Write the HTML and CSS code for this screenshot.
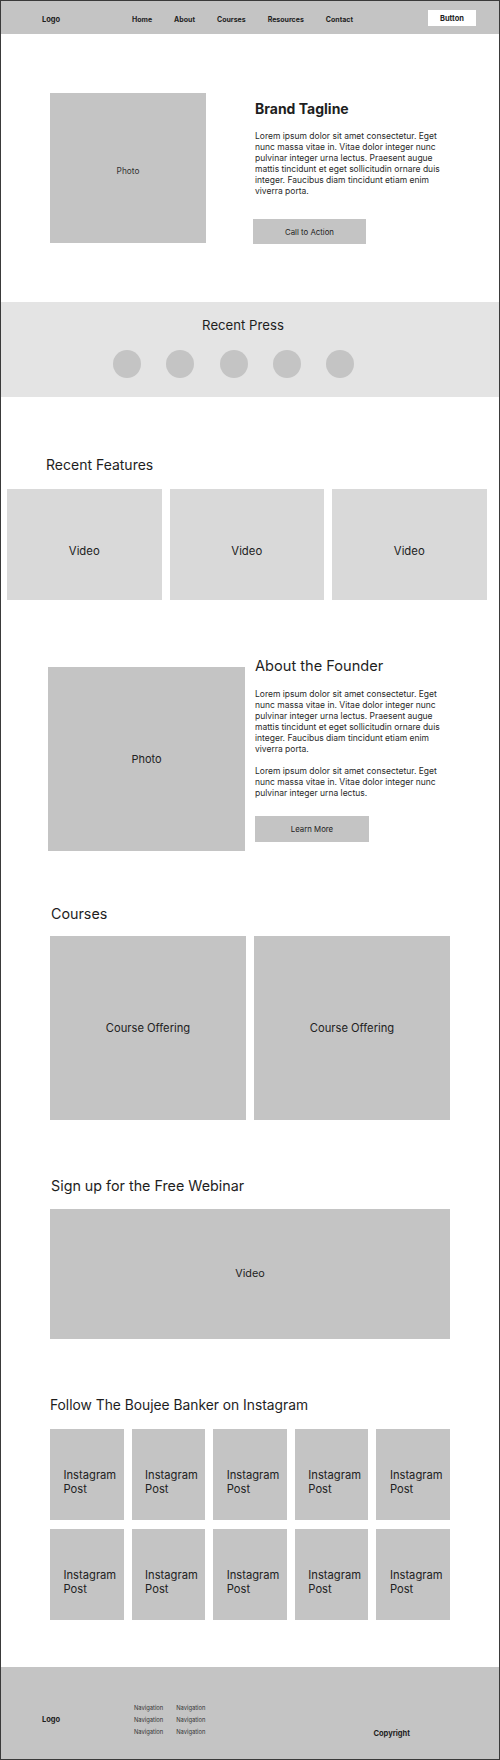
FILE: index.html
```html
<!DOCTYPE html>
<html lang="en">
<head>
  <meta charset="UTF-8" />
  <meta name="viewport" content="width=device-width, initial-scale=1.0" />
  <title>The Boujee Banker: Home</title>
  <link rel="stylesheet" href="styles.css">
</head>
<body>
  <div class="page">
    <header class="topbar">
      <div class="logo">Logo</div>
      <nav class="nav">
        <a href="#">Home</a>
        <a href="#">About</a>
        <a href="#">Courses</a>
        <a href="#">Resources</a>
        <a href="#">Contact</a>
      </nav>
      <a class="top-btn" href="#">Button</a>
    </header>

    <section class="hero">
      <div class="hero-photo">Photo</div>
      <div class="hero-text">
        <h1>Brand Tagline</h1>
        <p class="copy">Lorem ipsum dolor sit amet consectetur. Eget nunc massa vitae in. Vitae dolor integer nunc pulvinar integer urna lectus. Praesent augue mattis tincidunt et eget sollicitudin ornare duis integer. Faucibus diam tincidunt etiam enim viverra porta.</p>
        <a class="block-btn cta" href="#">Call to Action</a>
      </div>
    </section>

    <section class="press">
      <h2>Recent Press</h2>
      <div class="press-logos">
        <span></span><span></span><span></span><span></span><span></span>
      </div>
    </section>

    <section class="features">
      <h2>Recent Features</h2>
      <div class="feature-row">
        <div class="feature">Video</div>
        <div class="feature">Video</div>
        <div class="feature">Video</div>
      </div>
    </section>

    <section class="founder">
      <div class="founder-photo">Photo</div>
      <div class="founder-text">
        <h2>About the Founder</h2>
        <p class="copy">Lorem ipsum dolor sit amet consectetur. Eget nunc massa vitae in. Vitae dolor integer nunc pulvinar integer urna lectus. Praesent augue mattis tincidunt et eget sollicitudin ornare duis integer. Faucibus diam tincidunt etiam enim viverra porta.</p>
        <p class="copy second">Lorem ipsum dolor sit amet consectetur. Eget nunc massa vitae in. Vitae dolor integer nunc pulvinar integer urna lectus.</p>
        <a class="block-btn learn" href="#">Learn More</a>
      </div>
    </section>

    <section class="courses">
      <h2>Courses</h2>
      <div class="course-row">
        <div class="course">Course Offering</div>
        <div class="course">Course Offering</div>
      </div>
    </section>

    <section class="webinar">
      <h2>Sign up for the Free Webinar</h2>
      <div class="webinar-video">Video</div>
    </section>

    <section class="insta">
      <h2>Follow The Boujee Banker on Instagram</h2>
      <div class="insta-grid">
        <div class="post">Instagram Post</div>
        <div class="post">Instagram Post</div>
        <div class="post">Instagram Post</div>
        <div class="post">Instagram Post</div>
        <div class="post">Instagram Post</div>
        <div class="post">Instagram Post</div>
        <div class="post">Instagram Post</div>
        <div class="post">Instagram Post</div>
        <div class="post">Instagram Post</div>
        <div class="post">Instagram Post</div>
      </div>
    </section>

    <footer class="footer">
      <div class="logo footer-logo">Logo</div>
      <div class="footer-nav">
        <a href="#">Navigation</a><a href="#">Navigation</a>
        <a href="#">Navigation</a><a href="#">Navigation</a>
        <a href="#">Navigation</a><a href="#">Navigation</a>
      </div>
      <div class="copyright">Copyright</div>
    </footer>
  </div>
</body>
</html>
```

FILE: styles.css
```css
html, body {
  margin: 0;
  padding: 0;
  font-family: Inter, 'Liberation Sans', sans-serif;
  color: #1e1e1e;
  background: #fff;
}

a {
  color: inherit;
  text-decoration: none;
}

h1, h2, p {
  margin: 0;
}

.page {
  width: 500px;
  height: 1760px;
  box-sizing: border-box;
  border: 1px solid #3a3a3a;
  display: flex;
  flex-direction: column;
}

/* header */
.topbar {
  height: 33px;
  box-sizing: border-box;
  padding: 3px 23px 0 41px;
  background: #c4c4c4;
  display: flex;
  align-items: center;
}

.logo {
  width: 90px;
  font-size: 7.5px;
  font-weight: 700;
}

.nav {
  display: flex;
  gap: 22px;
  font-size: 7px;
  font-weight: 700;
}

.top-btn {
  margin-left: auto;
  width: 48px;
  height: 16px;
  margin-top: -2px;
  background: #fff;
  display: flex;
  justify-content: center;
  align-items: center;
  font-size: 7.5px;
  font-weight: 700;
}

/* hero */
.hero {
  height: 268px;
  box-sizing: border-box;
  padding: 59px 0 0 49px;
  display: flex;
  align-items: flex-start;
  gap: 49px;
}

.hero-photo {
  width: 156px;
  height: 150px;
  box-sizing: border-box;
  padding-top: 6px;
  background: #c4c4c4;
  display: flex;
  justify-content: center;
  align-items: center;
  font-size: 8.3px;
  color: #333;
}

.hero-text {
  padding-top: 7px;
  width: 195px;
}

.hero-text h1 {
  font-size: 14px;
  line-height: 18px;
  font-weight: 700;
}

.copy {
  font-size: 8.5px;
  line-height: 11px;
  color: #2a2a2a;
}

.hero-text .copy {
  margin-top: 13px;
}

.block-btn {
  display: flex;
  justify-content: center;
  align-items: center;
  background: #c4c4c4;
  font-size: 7.8px;
  color: #222;
}

.cta {
  width: 113px;
  height: 25px;
  margin: 22px 0 0 -2px;
}

/* press */
.press {
  height: 95px;
  box-sizing: border-box;
  padding-top: 15px;
  background: #e4e4e4;
}

.press h2 {
  padding-right: 14px;
  text-align: center;
  font-size: 13.2px;
  line-height: 17px;
  font-weight: 400;
}

.press-logos {
  display: flex;
  gap: 25.3px;
  margin: 16px 0 0 112px;
}

.press-logos span {
  width: 28px;
  height: 28px;
  border-radius: 50%;
  background: #c4c4c4;
}

/* section headings */
.features h2, .courses h2, .webinar h2, .insta h2 {
  font-weight: 400;
}

.features {
  padding: 58.6px 0 0 6px;
}

.features h2 {
  padding-left: 39px;
  font-size: 14px;
  line-height: 17px;
}

.feature-row {
  display: flex;
  gap: 8px;
  margin-top: 16.4px;
}

.feature {
  width: 154.5px;
  height: 111px;
  box-sizing: border-box;
  padding-top: 14px;
  background: #d9d9d9;
  display: flex;
  justify-content: center;
  align-items: center;
  font-size: 11.3px;
  color: #222;
}

/* founder */
.founder {
  margin-top: 57px;
  padding-left: 47px;
  display: flex;
  align-items: flex-start;
  gap: 10px;
}

.founder-photo {
  width: 197px;
  height: 184px;
  margin-top: 10px;
  background: #c4c4c4;
  display: flex;
  justify-content: center;
  align-items: center;
  font-size: 11px;
  color: #222;
}

.founder-text {
  width: 195px;
}

.founder-text h2 {
  font-size: 14.6px;
  line-height: 19px;
  font-weight: 400;
}

.founder-text .copy {
  margin-top: 12.7px;
}

.founder-text .copy.second {
  margin-top: 11.7px;
}

.learn {
  width: 114px;
  height: 26px;
  margin-top: 16.6px;
}

/* courses */
.courses {
  margin-top: 53.7px;
  padding-left: 49px;
}

.courses h2, .webinar h2 {
  padding-left: 1px;
  font-size: 14.3px;
  line-height: 18px;
}

.course-row {
  display: flex;
  gap: 8px;
  margin-top: 13.3px;
}

.course {
  width: 196px;
  height: 184px;
  background: #c4c4c4;
  display: flex;
  justify-content: center;
  align-items: center;
  font-size: 11.2px;
  color: #222;
}

/* webinar */
.webinar {
  margin-top: 57.4px;
  padding-left: 49px;
}

.webinar-video {
  width: 400px;
  height: 130px;
  margin-top: 13.6px;
  background: #c4c4c4;
  display: flex;
  justify-content: center;
  align-items: center;
  font-size: 10.8px;
  color: #222;
}

/* instagram */
.insta {
  margin-top: 58.3px;
  padding-left: 49px;
}

.insta h2 {
  font-size: 13.8px;
  line-height: 17px;
}

.insta-grid {
  width: 400px;
  display: grid;
  grid-template-columns: repeat(5, minmax(0, 1fr));
  grid-auto-rows: 91px;
  gap: 9px 8px;
  margin-top: 15px;
}

.post {
  box-sizing: border-box;
  padding: 40px 2px 0 13.5px;
  background: #c4c4c4;
  font-size: 11.2px;
  line-height: 13.5px;
  color: #222;
}

/* footer */
.footer {
  flex: 1;
  margin-top: 46.4px;
  padding: 14px 89px 0 41px;
  background: #c4c4c4;
  display: flex;
  align-items: center;
}

.footer-logo {
  width: 92px;
}

.footer-nav {
  display: grid;
  grid-template-columns: auto auto;
  column-gap: 13px;
  font-size: 5.8px;
  line-height: 11.8px;
  color: #333;
}

.copyright {
  margin: 27px 0 0 auto;
  font-size: 7.5px;
  font-weight: 700;
}
```
